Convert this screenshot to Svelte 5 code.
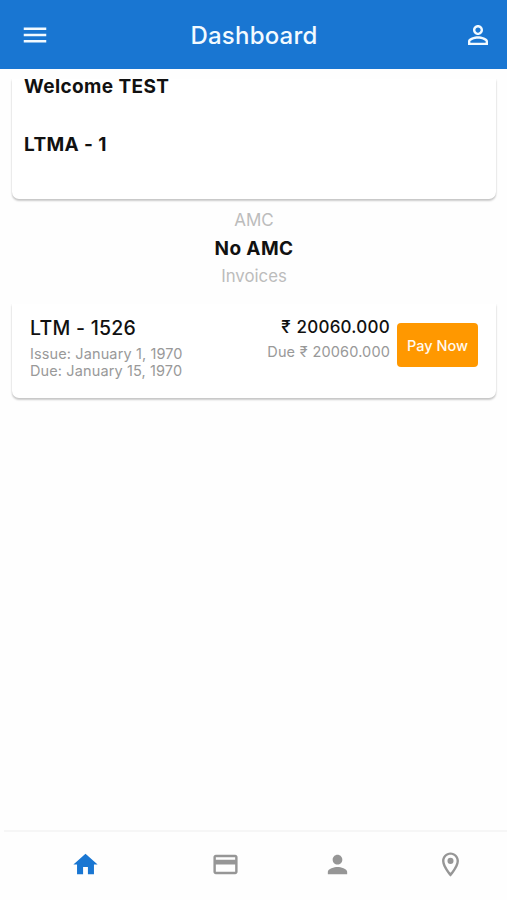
<script>
  const tabs = [
    { name: 'Home', active: true, d: 'M10 20v-6h4v6h5v-8h3L12 3 2 12h3v8z' },
    { name: 'Payments', d: 'M20 4H4c-1.11 0-1.99.89-1.99 2L2 18c0 1.11.89 2 2 2h16c1.11 0 2-.89 2-2V6c0-1.11-.89-2-2-2zm0 14H4v-6h16v6zm0-10H4V6h16v2z' },
    { name: 'Profile', d: 'M12 12c2.21 0 4-1.79 4-4s-1.79-4-4-4-4 1.79-4 4 1.79 4 4 4zm0 2c-2.67 0-8 1.34-8 4v2h16v-2c0-2.66-5.33-4-8-4z' },
    { name: 'Location', d: 'M12 2C8.13 2 5 5.13 5 9c0 5.25 7 13 7 13s7-7.75 7-13c0-3.87-3.13-7-7-7zM7 9c0-2.76 2.24-5 5-5s5 2.24 5 5c0 2.88-2.88 7.19-5 9.88C9.92 16.21 7 11.85 7 9zm7.5 0a2.5 2.5 0 1 1-5 0 2.5 2.5 0 0 1 5 0z' },
  ];
</script>

<div class="screen">
  <header>
    <svg class="menu" viewBox="0 0 24 24" aria-label="Menu"><path d="M3 18h18v-2H3v2zm0-5h18v-2H3v2zm0-7v2h18V6H3z" /></svg>
    <h1>Dashboard</h1>
    <svg viewBox="0 0 24 24" aria-label="Account"><path d="M12 5.9c1.16 0 2.1.94 2.1 2.1s-.94 2.1-2.1 2.1S9.9 9.16 9.9 8s.94-2.1 2.1-2.1m0 9c2.97 0 6.1 1.46 6.1 2.1v1.1H5.9V17c0-.64 3.13-2.1 6.1-2.1M12 4C9.79 4 8 5.79 8 8s1.79 4 4 4 4-1.79 4-4-1.79-4-4-4zm0 9c-2.67 0-8 1.34-8 4v3h16v-3c0-2.66-5.33-4-8-4z" /></svg>
  </header>
  <main>
    <section class="card welcome">
      <h2 class="hello">Welcome TEST</h2>
      <h2 class="unit">LTMA - 1</h2>
    </section>
    <div class="summary">
      <p class="label amc">AMC</p>
      <p class="none">No AMC</p>
      <p class="label inv">Invoices</p>
    </div>
    <section class="card invoice">
      <div class="info">
        <p class="number">LTM - 1526</p>
        <p class="date issue">Issue: January 1, 1970</p>
        <p class="date due">Due: January 15, 1970</p>
      </div>
      <div class="amounts">
        <p class="total">₹ 20060.000</p>
        <p class="owed">Due ₹ 20060.000</p>
      </div>
      <button>Pay Now</button>
    </section>
  </main>
  <nav>
    {#each tabs as tab}
      <svg class:active={tab.active} viewBox="0 0 24 24" aria-label={tab.name}><path d={tab.d} /></svg>
    {/each}
  </nav>
</div>

<style>
  :global(body) { background: #fefefe; }
  .screen {
    height: 900px;
    display: flex;
    flex-direction: column;
    overflow: hidden;
    background: #fefefe;
    font-family: Inter, "Noto Sans", sans-serif;
    color: #111;
  }
  h1, h2, p { margin: 0; white-space: nowrap; }
  svg { display: block; width: 29px; height: 29px; flex: none; fill: currentColor; }
  header {
    height: 69px;
    flex: none;
    box-sizing: border-box;
    padding: 1px 14px 0 20px;
    display: flex;
    align-items: center;
    justify-content: space-between;
    background: #1976d2;
    color: #f2faff;
  }
  header svg { width: 30px; height: 30px; }
  h1 { margin: 2px 5px 0 0; font-size: 24px; font-weight: 500; letter-spacing: 0.2px; line-height: 30px; }
  main { flex: 1; padding: 10px 11px 0 12px; }
  .card {
    box-sizing: border-box;
    border-radius: 0 0 7px 7px;
    background: #fff;
    box-shadow: 0 2px 2px rgba(0, 0, 0, 0.2), 0 0 2px rgba(0, 0, 0, 0.1);
    clip-path: inset(0 -4px -6px -4px);
  }
  .welcome {
    height: 120px;
    padding: 0 13px;
    display: flex;
    flex-direction: column;
  }
  .welcome h2 { font-size: 19px; font-weight: 700; line-height: 24px; letter-spacing: 0.3px; }
  .welcome .hello { margin: -4px 0 0 -1px; letter-spacing: 0.4px; }
  .welcome .unit { margin: 34px 0 0 -1px; letter-spacing: 0.4px; }
  .summary { height: 105px; padding-top: 9px; box-sizing: border-box; text-align: center; }
  .label { font-size: 17px; line-height: 24px; color: #bcbcbc; }
  .none { margin-top: 3px; font-size: 19px; font-weight: 700; line-height: 28px; letter-spacing: 0.4px; }
  .inv { margin-top: 1px; font-size: 16.8px; }
  .invoice { height: 94px; padding: 0 18px; display: flex; align-items: flex-start; }
  .info { flex: 1; padding-top: 12px; }
  .number { font-size: 19.5px; font-weight: 500; line-height: 24px; letter-spacing: 0.25px; }
  .date { font-size: 14.5px; line-height: 17px; color: #999; letter-spacing: 0.12px; }
  .issue { margin-top: 5px; }
  .amounts { padding-top: 11px; text-align: right; }
  .total { font-size: 17px; font-weight: 500; line-height: 24px; letter-spacing: 0.25px; word-spacing: 0.8px; }
  .owed { margin-top: 3px; font-size: 14.5px; line-height: 20px; color: #999; letter-spacing: 0.15px; word-spacing: 0.4px; }
  button {
    width: 81px;
    height: 44px;
    margin: 19px 0 0 7px;
    padding: 1px 0 0;
    border: 0;
    border-radius: 4px;
    background: #ff9800;
    color: #fffaf0;
    font: 500 14.5px/20px Inter, sans-serif;
    white-space: nowrap;
  }
  nav {
    height: 70px;
    flex: none;
    box-sizing: border-box;
    margin-left: 4px;
    padding: 18px 42px 0 67px;
    border-top: 2px solid #f6f6f6;
    display: flex;
    gap: 83.5px;
    color: #969696;
  }
  nav .active { color: #1976d2; margin-right: 27.2px; }
</style>
